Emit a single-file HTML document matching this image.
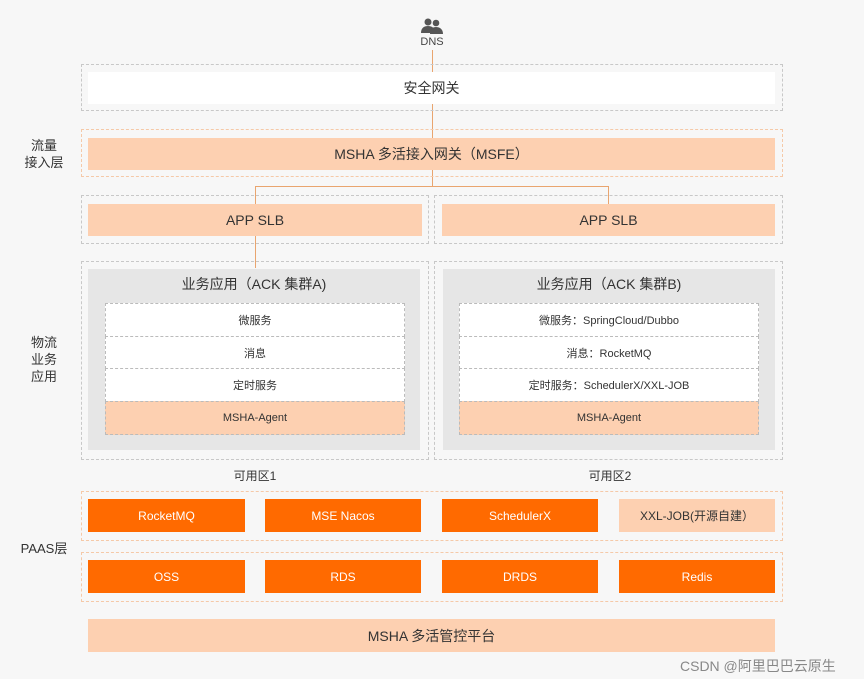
<!DOCTYPE html>
<html><head><meta charset="utf-8"><style>
body{margin:0;width:864px;height:679px;background:#f7f7f7;font-family:"Liberation Sans","Noto Sans CJK SC",sans-serif;color:#333;position:relative;overflow:hidden}
.a{position:absolute;box-sizing:border-box}
.d{border:1px dashed #c8c8c8}
.do{border:1px dashed #f5c9a8}
.c{display:flex;align-items:center;justify-content:center;font-size:13px}
.p{background:#fdd0b1}
.o{background:#ff6a00;color:#fff;font-size:12px}
.w{background:#fff}
.g{background:#e6e6e6}
.r{border:1px dashed #bbb;font-size:11px}
.l{font-size:13px;text-align:center;line-height:17px;color:#333}
.v{background:#e9a56f;width:1px}
.h{background:#e9a56f;height:1px}
</style></head><body>
<svg class="a" style="left:420px;top:18px" width="24" height="18" viewBox="0 0 24 18"><circle cx="8" cy="4" r="3.5" fill="#555"/><path d="M1 15c0-5 3-7 7-7s7 2 7 7z" fill="#555"/><circle cx="16" cy="5" r="3.3" fill="#555"/><path d="M10 16c0-5 2.5-7 6-7s7 2 7 7z" fill="#555"/></svg>
<div class="a" style="left:412px;top:36px;width:40px;text-align:center;font-size:11px;color:#444">DNS</div>
<div class="a v" style="left:432px;top:50px;height:136px"></div>
<div class="a h" style="left:255px;top:186px;width:354px"></div>
<div class="a v" style="left:255px;top:186px;height:18px"></div>
<div class="a v" style="left:608px;top:186px;height:18px"></div>
<div class="a v" style="left:255px;top:236px;height:32px"></div>

<div class="a d" style="left:81px;top:64px;width:702px;height:47px"></div>
<div class="a w c" style="left:88px;top:72px;width:687px;height:32px;font-size:14px">安全网关</div>

<div class="l a" style="left:22px;top:137px;width:44px">流量<br>接入层</div>
<div class="a do" style="left:81px;top:129px;width:702px;height:48px"></div>
<div class="a p c" style="left:88px;top:138px;width:687px;height:32px;font-size:14px">MSHA 多活接入网关（MSFE）</div>

<div class="a d" style="left:81px;top:195px;width:348px;height:49px"></div>
<div class="a d" style="left:434px;top:195px;width:349px;height:49px"></div>
<div class="a p c" style="left:88px;top:204px;width:334px;height:32px;font-size:14px">APP SLB</div>
<div class="a p c" style="left:442px;top:204px;width:333px;height:32px;font-size:14px">APP SLB</div>

<div class="l a" style="left:22px;top:334px;width:44px">物流<br>业务<br>应用</div>
<div class="a d" style="left:81px;top:261px;width:348px;height:199px"></div>
<div class="a d" style="left:434px;top:261px;width:349px;height:199px"></div>
<div class="a g" style="left:88px;top:269px;width:332px;height:181px"></div>
<div class="a g" style="left:443px;top:269px;width:332px;height:181px"></div>
<div class="a c" style="left:88px;top:274px;width:332px;height:20px;font-size:14px">业务应用（ACK 集群A)</div>
<div class="a c" style="left:443px;top:274px;width:332px;height:20px;font-size:14px">业务应用（ACK 集群B)</div>

<div class="a w r c" style="left:105px;top:303px;width:300px;height:34px">微服务</div>
<div class="a w r c" style="left:105px;top:336px;width:300px;height:33px">消息</div>
<div class="a w r c" style="left:105px;top:368px;width:300px;height:34px">定时服务</div>
<div class="a p r c" style="left:105px;top:401px;width:300px;height:34px">MSHA-Agent</div>
<div class="a w r c" style="left:459px;top:303px;width:300px;height:34px">微服务：SpringCloud/Dubbo</div>
<div class="a w r c" style="left:459px;top:336px;width:300px;height:33px">消息：RocketMQ</div>
<div class="a w r c" style="left:459px;top:368px;width:300px;height:34px">定时服务：SchedulerX/XXL-JOB</div>
<div class="a p r c" style="left:459px;top:401px;width:300px;height:34px">MSHA-Agent</div>

<div class="a c" style="left:215px;top:466px;width:80px;height:18px;font-size:12px">可用区1</div>
<div class="a c" style="left:570px;top:466px;width:80px;height:18px;font-size:12px">可用区2</div>

<div class="l a" style="left:14px;top:540px;width:60px">PAAS层</div>
<div class="a do" style="left:81px;top:491px;width:702px;height:50px"></div>
<div class="a o c" style="left:88px;top:499px;width:157px;height:33px">RocketMQ</div>
<div class="a o c" style="left:265px;top:499px;width:156px;height:33px">MSE Nacos</div>
<div class="a o c" style="left:442px;top:499px;width:156px;height:33px">SchedulerX</div>
<div class="a p c" style="left:619px;top:499px;width:156px;height:33px;font-size:12px">XXL-JOB(开源自建）</div>
<div class="a do" style="left:81px;top:552px;width:702px;height:50px"></div>
<div class="a o c" style="left:88px;top:560px;width:157px;height:33px">OSS</div>
<div class="a o c" style="left:265px;top:560px;width:156px;height:33px">RDS</div>
<div class="a o c" style="left:442px;top:560px;width:156px;height:33px">DRDS</div>
<div class="a o c" style="left:619px;top:560px;width:156px;height:33px">Redis</div>

<div class="a p c" style="left:88px;top:619px;width:687px;height:33px;font-size:14px">MSHA 多活管控平台</div>
<div class="a" style="left:680px;top:656px;font-size:14px;color:#888">CSDN @阿里巴巴云原生</div>
</body></html>
